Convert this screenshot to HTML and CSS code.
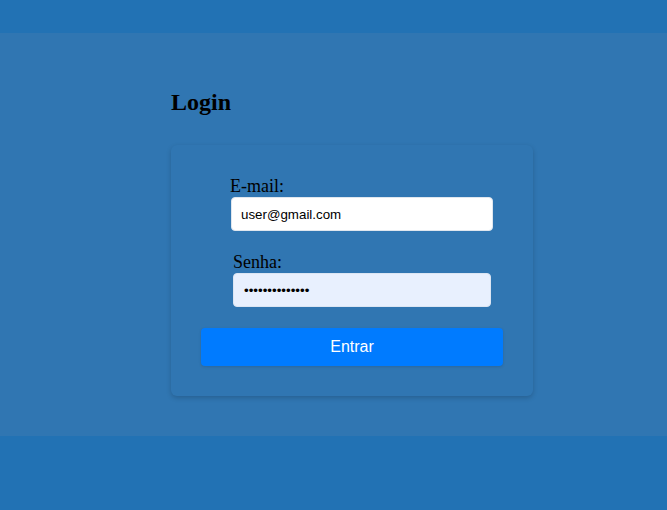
FILE: index.html
```html
<!DOCTYPE html>
<html lang="pt-BR">
<head>
<meta charset="utf-8">
<title>Login</title>
<link rel="stylesheet" href="styles.css">
</head>
<body>
<main class="band">
  <div class="container">
    <h2 class="title">Login</h2>
    <form class="card">
      <div class="group group-email">
        <label class="label" for="email">E-mail:</label>
        <input class="input" id="email" type="email" value="user@gmail.com">
      </div>
      <div class="group group-senha">
        <label class="label" for="senha">Senha:</label>
        <input class="input input-filled" id="senha" type="password" value="12345678901234">
      </div>
      <button class="button" type="button">Entrar</button>
    </form>
  </div>
</main>
</body>
</html>
```

FILE: styles.css
```css
html, body {
  margin: 0;
  padding: 0;
}
body {
  background: #2272b4;
  font-family: "Liberation Serif", "Times New Roman", serif;
  height: 510px;
  overflow: hidden;
}
.band {
  margin-top: 33px;
  height: 403px;
  background: #3076b2;
  box-sizing: border-box;
  padding-top: 56px;
}
.container {
  width: 400px;
  margin: 0 auto;
  padding-left: 37.5px;
  box-sizing: border-box;
}
.title {
  margin: 0;
  font-size: 24px;
  font-weight: bold;
  line-height: 27px;
  color: #000;
}
.card {
  margin-top: 29px;
  width: 362px;
  box-sizing: border-box;
  padding: 31px 30px 30px;
  background: #3076b2;
  border-radius: 6px;
  box-shadow: 0 2px 5px rgba(0, 0, 0, 0.18);
  display: flex;
  flex-direction: column;
}
.group {
  display: flex;
  flex-direction: column;
  margin-bottom: 21px;
}
.label {
  font-size: 18px;
  line-height: 21px;
  color: #000;
}
.group-email .label { padding-left: 29px; }
.group-email .input { margin-left: 30px; width: 262px; }
.group-senha .label { padding-left: 32px; }
.group-senha .input { margin-left: 32px; width: 258px; }
.input {
  box-sizing: border-box;
  height: 34px;
  border: 1px solid #dfe6ee;
  border-radius: 4px;
  background: #fff;
  padding: 0 9px;
  font-family: "Liberation Sans", Arial, sans-serif;
  font-size: 13.33px;
  color: #000;
  outline: none;
}
.input-filled {
  background: #e8f0fe;
  border-color: #dbe5f3;
  padding: 0 10px;
}
.button {
  height: 38px;
  width: 302px;
  border: none;
  border-radius: 4px;
  background: #007bff;
  color: #fff;
  font-family: "Liberation Sans", Arial, sans-serif;
  font-size: 16px;
  box-shadow: 0 1px 3px rgba(0, 0, 0, 0.12);
  cursor: pointer;
}
```
